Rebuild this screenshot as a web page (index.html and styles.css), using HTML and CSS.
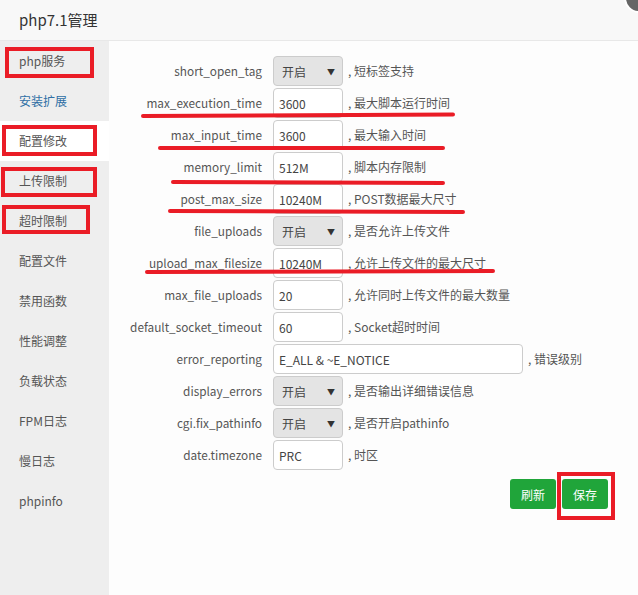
FILE: index.html
```html
<!DOCTYPE html>
<html lang="zh">
<head>
<meta charset="utf-8">
<link rel="stylesheet" href="styles.css">
</head>
<body>
<div class="dialog">
  <div class="header">php7.1管理</div>
  <div class="close"><span class="x"></span></div>
  <div class="body">
    <ul class="nav">
      <li>php服务</li>
      <li class="link">安装扩展</li>
      <li class="active">配置修改</li>
      <li>上传限制</li>
      <li>超时限制</li>
      <li>配置文件</li>
      <li>禁用函数</li>
      <li>性能调整</li>
      <li>负载状态</li>
      <li>FPM日志</li>
      <li>慢日志</li>
      <li>phpinfo</li>
    </ul>
    <div class="content">
      <div class="row"><label>short_open_tag</label><div class="select"><span>开启</span><span class="arrow">▼</span></div><span class="desc">, 短标签支持</span></div>
      <div class="row"><label>max_execution_time</label><input class="inp" value="3600"><span class="desc">, 最大脚本运行时间</span></div>
      <div class="row"><label>max_input_time</label><input class="inp" value="3600"><span class="desc">, 最大输入时间</span></div>
      <div class="row"><label>memory_limit</label><input class="inp" value="512M"><span class="desc">, 脚本内存限制</span></div>
      <div class="row"><label>post_max_size</label><input class="inp" value="10240M"><span class="desc">, POST数据最大尺寸</span></div>
      <div class="row"><label>file_uploads</label><div class="select"><span>开启</span><span class="arrow">▼</span></div><span class="desc">, 是否允许上传文件</span></div>
      <div class="row"><label>upload_max_filesize</label><input class="inp" value="10240M"><span class="desc">, 允许上传文件的最大尺寸</span></div>
      <div class="row"><label>max_file_uploads</label><input class="inp" value="20"><span class="desc">, 允许同时上传文件的最大数量</span></div>
      <div class="row"><label>default_socket_timeout</label><input class="inp" value="60"><span class="desc">, Socket超时时间</span></div>
      <div class="row"><label>error_reporting</label><input class="inp wide" value="E_ALL &amp; ~E_NOTICE"><span class="desc">, 错误级别</span></div>
      <div class="row"><label>display_errors</label><div class="select"><span>开启</span><span class="arrow">▼</span></div><span class="desc">, 是否输出详细错误信息</span></div>
      <div class="row"><label>cgi.fix_pathinfo</label><div class="select"><span>开启</span><span class="arrow">▼</span></div><span class="desc">, 是否开启pathinfo</span></div>
      <div class="row"><label>date.timezone</label><input class="inp" value="PRC"><span class="desc">, 时区</span></div>
      <div class="actions"><button class="btn">刷新</button><button class="btn">保存</button></div>
    </div>
  </div>
  <svg class="marks" width="638" height="595" viewBox="0 0 638 595">
    <g fill="none" stroke="#ea1c26" stroke-width="4">
      <rect x="7" y="49" width="85" height="27"/>
      <rect x="4" y="127" width="91" height="27"/>
      <rect x="3" y="169" width="92" height="26"/>
      <rect x="4" y="207" width="84" height="25"/>
      <rect x="559" y="474" width="54" height="44"/>
    </g>
    <g fill="none" stroke="#ea1c26" stroke-width="4" stroke-linecap="round">
      <path d="M143 116 L453 114.5"/>
      <path d="M160 148 L443 148"/>
      <path d="M173 182 L443 183"/>
      <path d="M170 211 L463 212"/>
      <path d="M147 272 L493 271"/>
    </g>
  </svg>
</div>
</body>
</html>
```

FILE: styles.css
```css
html, body {
  margin: 0;
  padding: 0;
}
body {
  font-family: "Noto Sans CJK SC", "Noto Sans", sans-serif;
  color: #555;
  background: #fff;
}
.dialog {
  position: relative;
  width: 638px;
  height: 595px;
  overflow: hidden;
}
.header {
  height: 40px;
  line-height: 40px;
  padding-left: 19px;
  font-size: 15px;
  color: #333;
  background: #f8f8f8;
  border-bottom: 1px solid #e8e8e8;
}
.close {
  position: absolute;
  left: 624px;
  top: -17px;
  width: 26px;
  height: 26px;
  border-radius: 50%;
  background: #666;
  border: 2px solid #fff;
}
.close .x {
  position: absolute;
  left: 8px;
  top: 12px;
  width: 14px;
  height: 2px;
  background: #fff;
  transform: rotate(45deg);
}
.body {
  display: flex;
  height: 554px;
}
.nav {
  width: 109px;
  margin: 0;
  padding: 0;
  list-style: none;
  background: #eee;
}
.nav li {
  height: 40px;
  line-height: 40px;
  padding-left: 19px;
  font-size: 12px;
  color: #555;
}
.nav li.link {
  color: #2f6ea5;
}
.nav li.active {
  background: #fff;
}
.content {
  flex: 1;
  background: #fdfdfd;
  padding-top: 15px;
}
.row {
  display: flex;
  align-items: center;
  height: 30px;
  margin-bottom: 2px;
  font-size: 12px;
}
.row label {
  width: 153px;
  margin-right: 11px;
  padding-bottom: 1px;
  text-align: right;
  color: #555;
  font-size: 11.8px;
}
.select {
  box-sizing: border-box;
  width: 70px;
  height: 30px;
  border: 1px solid #ccc;
  border-radius: 4px;
  background: #e4e4e4;
  display: flex;
  align-items: center;
  justify-content: space-between;
  padding: 0 7px 0 8px;
  color: #444;
}
.select .arrow {
  font-size: 8px;
  color: #333;
}
.inp {
  box-sizing: border-box;
  width: 70px;
  height: 30px;
  border: 1px solid #ccc;
  border-radius: 4px;
  padding: 0 5px;
  font-family: inherit;
  font-size: 12px;
  color: #444;
  background: #fff;
  outline: none;
}
.inp.wide {
  width: 250px;
}
.desc {
  margin-left: 5px;
  padding-bottom: 1px;
  color: #555;
}
.actions {
  display: flex;
  justify-content: flex-end;
  gap: 6px;
  padding-right: 30px;
  margin-top: 9px;
}
.btn {
  width: 46px;
  height: 30px;
  border: 0;
  border-radius: 3px;
  background: #20a53a;
  color: #fff;
  font-family: inherit;
  font-size: 12px;
  padding: 0;
}
.marks {
  position: absolute;
  left: 0;
  top: 0;
  pointer-events: none;
}
```
